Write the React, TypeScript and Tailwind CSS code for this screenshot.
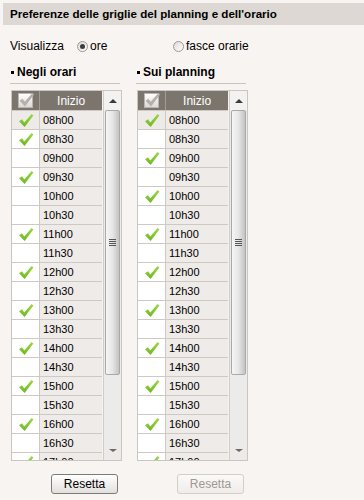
const TIMES = [
  "08h00", "08h30", "09h00", "09h30", "10h00", "10h30", "11h00", "11h30", "12h00",
  "12h30", "13h00", "13h30", "14h00", "14h30", "15h00", "15h30", "16h00", "16h30", "17h00",
];

const LEFT_CHECKED = ["08h00", "08h30", "09h30", "11h00", "12h00", "13h00", "14h00", "15h00", "16h00", "17h00"];
const RIGHT_CHECKED = ["08h00", "09h00", "10h00", "11h00", "12h00", "13h00", "14h00", "15h00", "16h00", "17h00"];

function GreenCheck() {
  return (
    <svg width="16" height="15" viewBox="0 0 16 15">
      <defs>
        <linearGradient id="gc" x1="0" y1="0" x2="0" y2="1">
          <stop offset="0" stopColor="#9bd84a" />
          <stop offset="1" stopColor="#6cb81c" />
        </linearGradient>
      </defs>
      <path d="M1 8.2 L4 6.2 L6.3 9.4 L13.6 1 L15.4 2.4 L6.6 14 Z" fill="url(#gc)" />
    </svg>
  );
}

function HeaderCheckbox() {
  return (
    <div className="relative h-[15px] w-[15px] border border-[#b9b4ae] bg-gradient-to-b from-[#ffffff] to-[#dcd9d6]">
      <svg className="absolute -left-[1px] -top-[2px]" width="17" height="16" viewBox="0 0 16 15">
        <path d="M1.5 8.2 L4.2 6.4 L6.3 9.2 L13.6 1 L15.2 2.4 L6.6 13.6 Z" fill="#b3b0ad" />
      </svg>
    </div>
  );
}

function Scrollbar() {
  return (
    <div className="flex w-[18px] flex-col border-l border-[#d3cdc7] bg-[#ecebe9]">
      <div className="flex h-[19px] items-center justify-center bg-[#f3f2f1]">
        <div className="h-0 w-0 border-x-[4px] border-b-[4px] border-x-transparent border-b-[#3a3a3a]" />
      </div>
      <div className="mx-[1px] flex h-[265px] items-center justify-center rounded-[2px] border border-[#a9a9a9] bg-gradient-to-r from-[#f6f6f6] via-[#e6e6e6] to-[#c3c3c3]">
        <div className="flex flex-col gap-[1px]">
          <div className="h-[1px] w-[7px] bg-[#555]" />
          <div className="h-[1px] w-[7px] bg-[#555]" />
          <div className="h-[1px] w-[7px] bg-[#555]" />
          <div className="h-[1px] w-[7px] bg-[#555]" />
        </div>
      </div>
      <div className="flex-1" />
      <div className="flex h-[14px] items-start justify-center pt-[3px]">
        <div className="h-0 w-0 border-x-[4px] border-t-[3px] border-x-transparent border-t-[#6a6a6a]" />
      </div>
    </div>
  );
}

function TimeTable({ checked }: { checked: string[] }) {
  return (
    <div className="flex h-[371px] w-[111px] border border-[#cbc5bf] bg-[#f3f2f1]">
      <div className="flex w-[91px] flex-col overflow-hidden">
        <div className="flex h-[19px] shrink-0 bg-[#7b756d] text-white">
          <div className="flex w-[28px] items-center justify-center border-r border-[#a29c95]">
            <HeaderCheckbox />
          </div>
          <div className="flex flex-1 items-center justify-center text-[12px]">Inizio</div>
        </div>
        {TIMES.map((t, i) => (
          <div key={t} className="flex h-[19px] shrink-0 border-t border-[#cfc9c3]">
            <div
              className={`flex w-[28px] items-center justify-center border-r border-[#cfc9c3] ${
                i === 0 ? "bg-[#eeeae7]" : "bg-white"
              }`}
            >
              {checked.includes(t) && <GreenCheck />}
            </div>
            <div className="flex flex-1 items-center bg-[#efebe8] pl-[3px] text-[11px] text-black">{t}</div>
          </div>
        ))}
      </div>
      <div className="w-[1px] bg-[#f3f2f1]" />
      <Scrollbar />
    </div>
  );
}

function Radio({ on }: { on?: boolean }) {
  return (
    <div className="flex h-[11px] w-[11px] items-center justify-center rounded-full border border-[#9d9892] bg-gradient-to-br from-[#dcdad8] to-white">
      {on && <div className="h-[5px] w-[5px] rounded-full bg-[#3c3c3c]" />}
    </div>
  );
}

function Section({ title, checked, disabled }: { title: string; checked: string[]; disabled?: boolean }) {
  return (
    <div className="flex w-[111px] flex-col">
      <div className="flex h-[14px] items-center gap-[3px] pl-[1px] text-[12px] font-bold text-black">
        <div className="h-[3px] w-[3px] bg-black" />
        <span>{title}</span>
      </div>
      <div className="mt-[4px] h-[2px] w-[110px] border-t border-[#c9c3bd] bg-[#f7f3ef]" />
      <div className="mt-[5px] pl-[1px]">
        <TimeTable checked={checked} />
      </div>
      <div className="mt-[13px] flex justify-end pr-[3px]">
        <button
          className={`h-[20px] w-[67px] rounded-[3px] border text-[12px] ${
            disabled
              ? "border-[#d4cec8] bg-gradient-to-b from-[#fbfaf9] to-[#efecea] text-[#9e9892]"
              : "border-[#7f7a75] bg-gradient-to-b from-white to-[#e3e0dd] text-black"
          }`}
        >
          Resetta
        </button>
      </div>
    </div>
  );
}

export default function App() {
  return (
    <div className="h-[500px] w-[364px] overflow-hidden bg-[#f8f4f1] pt-[3px] font-['Liberation_Sans',Arial,sans-serif] text-black">
      <div className="ml-[3px] flex h-[22px] items-center bg-[#ddd8d3] pl-[7px] text-[11.6px] font-bold">
        Preferenze delle griglie del planning e dell'orario
      </div>

      <div className="mt-[14px] flex h-[14px] items-center pl-[10px] text-[12px]">
        <span className="w-[67px]">Visualizza</span>
        <div className="flex w-[96px] items-center gap-[2px]">
          <Radio on />
          <span>ore</span>
        </div>
        <div className="flex items-center gap-[2px]">
          <Radio />
          <span>fasce orarie</span>
        </div>
      </div>

      <div className="mt-[12px] flex gap-[15px] pl-[10px]">
        <Section title="Negli orari" checked={LEFT_CHECKED} />
        <Section title="Sui planning" checked={RIGHT_CHECKED} disabled />
      </div>
    </div>
  );
}
